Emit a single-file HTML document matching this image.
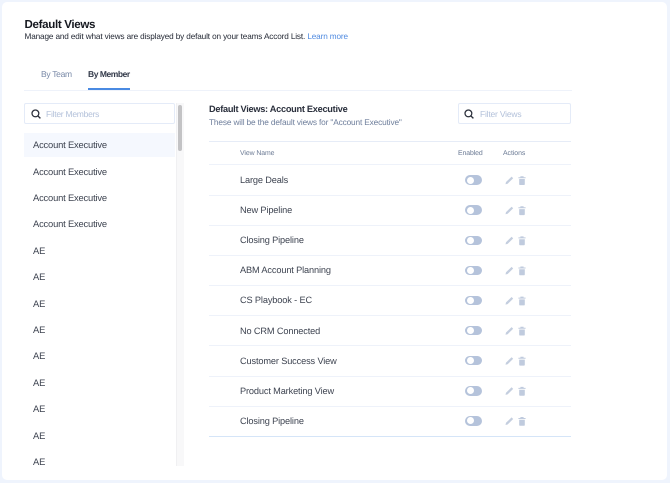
<!DOCTYPE html>
<html><head><meta charset="utf-8">
<style>
html,body{margin:0;padding:0}
body{width:670px;height:483px;background:#eff4fd;overflow:hidden;position:relative;font-family:"Liberation Sans",sans-serif;color:#2f3542;text-rendering:geometricPrecision}
.card{position:absolute;left:2px;top:2px;width:665px;height:478px;background:#fff;border-radius:5px}
.t{position:absolute;white-space:nowrap;line-height:14px;filter:blur(.2px)}
.ln{position:absolute;height:1px;background:#eef2fa}
.box{position:absolute;box-sizing:border-box;border:1px solid #e4ebf8;border-radius:2px;background:#fff;height:21px;top:103px}
.ic{position:absolute}
.li{font-size:9.4px;left:33px;color:#3d4350;letter-spacing:-.19px}
.vn{font-size:9.2px;left:240px;color:#3d4350;letter-spacing:-.13px}
.tg{position:absolute;left:465px;width:17px;height:9.5px;border-radius:5px;background:#b5c3db}
.tg:after{content:"";position:absolute;left:1.5px;top:1.3px;width:7px;height:7px;border-radius:50%;background:#fff}
</style></head><body>
<div class="card"></div>

<div class="t" style="left:24.5px;top:17.6px;font-size:11.6px;font-weight:bold;color:#15181f;letter-spacing:-.35px">Default Views</div>
<div class="t" style="left:24.5px;top:30px;font-size:8.2px;color:#1f2430;letter-spacing:-.13px">Manage and edit what views are displayed by default on your teams Accord List. <span style="color:#4f8ae0">Learn more</span></div>

<div class="t" style="left:41px;top:67px;font-size:8.5px;color:#7a8aa8;letter-spacing:-.3px">By Team</div>
<div class="t" style="left:88px;top:67px;font-size:8.5px;font-weight:bold;color:#333a4a;letter-spacing:-.45px">By Member</div>
<div class="ln" style="left:24px;top:90px;width:548px"></div>
<div style="position:absolute;left:88px;top:88px;width:41.5px;height:2px;background:#4a8ae2"></div>

<!-- left column -->
<div class="box" style="left:24px;width:151px"></div>
<svg class="ic" style="left:30.5px;top:108.8px" width="10" height="10" viewBox="0 0 10 10"><circle cx="4.4" cy="4.4" r="3.4" fill="none" stroke="#2a2f3a" stroke-width="1.25"/><path d="M6.8 6.8 9.4 9.4" stroke="#2a2f3a" stroke-width="1.35"/></svg>
<div class="t" style="left:46px;top:107px;font-size:8.5px;color:#b3c1da;letter-spacing:-.25px">Filter Members</div>

<div style="position:absolute;left:176px;top:103px;width:7.5px;height:363px;background:#f8f8f9;border-left:1px solid #f0f0f2;box-sizing:border-box"></div>
<div style="position:absolute;left:178px;top:105px;width:3.5px;height:46px;border-radius:2px;background:#c3c3c5"></div>

<div style="position:absolute;left:24px;top:133px;width:151px;height:24px;background:#f5f8fe"></div>
<div class="t li" style="top:138.2px">Account Executive</div>
<div class="t li" style="top:164.6px">Account Executive</div>
<div class="t li" style="top:191px">Account Executive</div>
<div class="t li" style="top:217.4px">Account Executive</div>
<div class="t li" style="top:243.8px">AE</div>
<div class="t li" style="top:270.2px">AE</div>
<div class="t li" style="top:296.6px">AE</div>
<div class="t li" style="top:323px">AE</div>
<div class="t li" style="top:349.4px">AE</div>
<div class="t li" style="top:375.8px">AE</div>
<div class="t li" style="top:402.2px">AE</div>
<div class="t li" style="top:428.8px">AE</div>
<div style="position:absolute;left:24px;top:455px;width:151px;height:11.5px;overflow:hidden"><div class="t li" style="left:9px;top:0.2px">AE</div></div>

<!-- right column -->
<div class="t" style="left:209px;top:102.3px;font-size:9.2px;font-weight:bold;color:#2a2f3c;letter-spacing:-.27px">Default Views: Account Executive</div>
<div class="t" style="left:209px;top:115.2px;font-size:8.3px;color:#6f7f9c;letter-spacing:-.15px">These will be the default views for "Account Executive"</div>

<div class="box" style="left:458px;width:113px"></div>
<svg class="ic" style="left:464px;top:108.8px" width="10" height="10" viewBox="0 0 10 10"><circle cx="4.4" cy="4.4" r="3.4" fill="none" stroke="#2a2f3a" stroke-width="1.25"/><path d="M6.8 6.8 9.4 9.4" stroke="#2a2f3a" stroke-width="1.35"/></svg>
<div class="t" style="left:480px;top:107px;font-size:8.5px;color:#b3c1da;letter-spacing:-.2px">Filter Views</div>

<div class="ln" style="left:209px;top:141px;width:362px;background:#e6ecf7"></div>
<div class="t" style="left:240px;top:147px;font-size:6.9px;color:#6b7a94;letter-spacing:-.08px">View Name</div>
<div class="t" style="left:458px;top:147px;font-size:6.9px;color:#6b7a94;letter-spacing:-.1px">Enabled</div>
<div class="t" style="left:503px;top:147px;font-size:6.9px;color:#6b7a94;letter-spacing:-.05px">Actions</div>
<div class="ln" style="left:209px;top:164px;width:362px"></div>

<div class="t vn" style="top:173px">Large Deals</div>
<div class="t vn" style="top:203.1px">New Pipeline</div>
<div class="t vn" style="top:233.2px">Closing Pipeline</div>
<div class="t vn" style="top:263.3px">ABM Account Planning</div>
<div class="t vn" style="top:293.4px">CS Playbook - EC</div>
<div class="t vn" style="top:323.5px">No CRM Connected</div>
<div class="t vn" style="top:353.6px">Customer Success View</div>
<div class="t vn" style="top:383.7px">Product Marketing View</div>
<div class="t vn" style="top:413.8px">Closing Pipeline</div>

<div class="ln" style="left:209px;top:195px;width:362px"></div>
<div class="ln" style="left:209px;top:225px;width:362px"></div>
<div class="ln" style="left:209px;top:255px;width:362px"></div>
<div class="ln" style="left:209px;top:285px;width:362px"></div>
<div class="ln" style="left:209px;top:315px;width:362px"></div>
<div class="ln" style="left:209px;top:345px;width:362px"></div>
<div class="ln" style="left:209px;top:376px;width:362px"></div>
<div class="ln" style="left:209px;top:406px;width:362px"></div>
<div class="ln" style="left:209px;top:436px;width:362px;background:#d5e5f8"></div>

<div class="tg" style="top:175.3px"></div>
<div class="tg" style="top:205.4px"></div>
<div class="tg" style="top:235.5px"></div>
<div class="tg" style="top:265.6px"></div>
<div class="tg" style="top:295.7px"></div>
<div class="tg" style="top:325.8px"></div>
<div class="tg" style="top:355.9px"></div>
<div class="tg" style="top:386px"></div>
<div class="tg" style="top:416.1px"></div>

<svg class="ic" style="left:500px;top:169.5px" width="30" height="262" viewBox="0 0 30 262">
<defs><g id="a"><path d="M5.5 14.2 6 12 11.6 6.6 13.2 8.2 7.6 13.7Z" fill="#c4cedf"/><path d="M18.4 7.2H25.6V8.2H18.4ZM20.4 6.2H23.6V7.2H20.4ZM19.2 9H24.8V14.2Q24.8 15 24 15H20Q19.2 15 19.2 14.2Z" fill="#c0cbde"/></g></defs>
<use href="#a" y="0"/><use href="#a" y="30.1"/><use href="#a" y="60.2"/><use href="#a" y="90.3"/><use href="#a" y="120.4"/><use href="#a" y="150.5"/><use href="#a" y="180.6"/><use href="#a" y="210.7"/><use href="#a" y="240.8"/>
</svg>
</body></html>
